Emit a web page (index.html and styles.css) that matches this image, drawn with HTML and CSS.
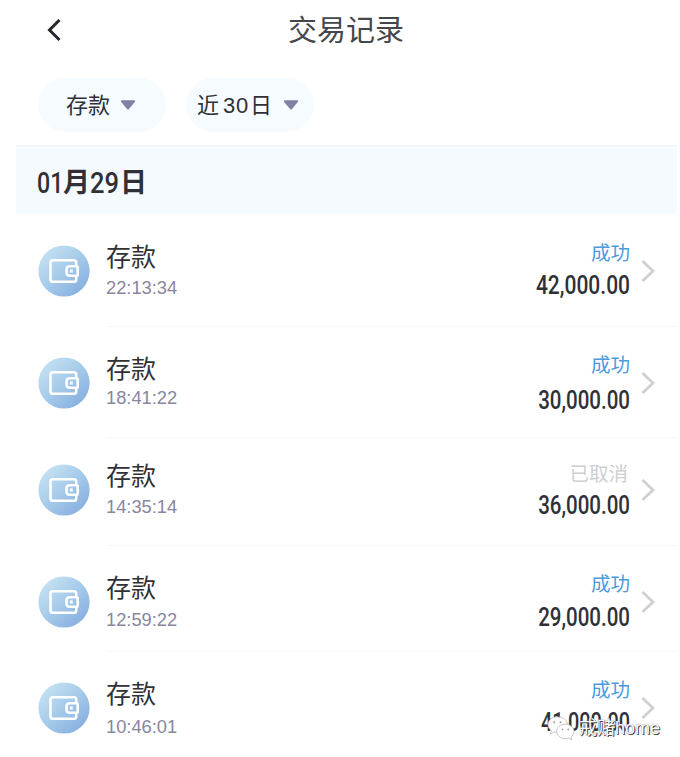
FILE: index.html
```html
<!DOCTYPE html>
<html lang="zh-CN">
<head>
<meta charset="utf-8">
<title>交易记录</title>
<link rel="stylesheet" href="styles.css">
</head>
<body>
<svg class="defs" width="0" height="0" aria-hidden="true">
  <defs>
    <linearGradient id="disc" x1="0.1" y1="0.1" x2="0.85" y2="0.9">
      <stop offset="0" stop-color="#c6e2f3"/>
      <stop offset="0.5" stop-color="#a6cbea"/>
      <stop offset="1" stop-color="#88b0e0"/>
    </linearGradient>
    <symbol id="wallet" viewBox="0 0 52 52">
      <circle cx="26" cy="26" r="25.6" fill="url(#disc)"/>
      <g fill="none" stroke="#fff" stroke-width="2.6" stroke-linejoin="round">
        <path d="M38.2 21V17.500Q38.200 15.200 35.900 15.200H14.800Q12.500 15.200 12.500 17.500V34.500Q12.500 36.800 14.800 36.800H35.900Q38.200 36.800 38.200 34.500V31"/>
        <path d="M38.500 21.300H32Q28.500 21.300 28.500 24.300V27.500Q28.500 30.700 32 30.700H38.500Q39.700 30.700 39.700 29.500V22.500Q39.700 21.300 38.500 21.300Z"/>
      </g>
      <rect x="31.800" y="24.500" width="3" height="3" fill="#fff"/>
    </symbol>
    <symbol id="chevron" viewBox="0 0 16 26">
      <path d="M2.500 3L13 13L2.500 23" fill="none" stroke="#cfd0d4" stroke-width="2.800"/>
    </symbol>
    <symbol id="caret" viewBox="0 0 16 10">
      <path d="M1.800 1.200H14.200L8 8.500Z" fill="#8080a4" stroke="#8080a4" stroke-width="2" stroke-linejoin="round"/>
    </symbol>
  </defs>
</svg>
<main class="page">
  <header class="bar">
    <svg class="back" viewBox="0 0 16 26"><path d="M13.500 3L3.500 13L13.500 23" fill="none" stroke="#25262b" stroke-width="3"/></svg>
    <h1 class="title">交易记录</h1>
  </header>
  <nav class="filters">
    <div class="pill pill-type"><span>存款</span><svg class="caret"><use href="#caret"/></svg></div>
    <div class="pill pill-range"><span>近</span><span class="days">30</span><span>日</span><svg class="caret"><use href="#caret"/></svg></div>
  </nav>
  <h2 class="date"><span class="num">01</span><span>月</span><span class="num num-day">29</span><span>日</span></h2>
  <section class="list">
    <article class="row row-1">
      <svg class="icon"><use href="#wallet"/></svg>
      <div class="info"><div class="name">存款</div><div class="time">22:13:34</div></div>
      <div class="result"><div class="status">成功</div><div class="amount">42,000.00</div></div>
      <svg class="chevron"><use href="#chevron"/></svg>
    </article>
    <article class="row row-2">
      <svg class="icon"><use href="#wallet"/></svg>
      <div class="info"><div class="name">存款</div><div class="time">18:41:22</div></div>
      <div class="result"><div class="status">成功</div><div class="amount">30,000.00</div></div>
      <svg class="chevron"><use href="#chevron"/></svg>
    </article>
    <article class="row row-3">
      <svg class="icon"><use href="#wallet"/></svg>
      <div class="info"><div class="name">存款</div><div class="time">14:35:14</div></div>
      <div class="result"><div class="status cancelled">已取消</div><div class="amount">36,000.00</div></div>
      <svg class="chevron"><use href="#chevron"/></svg>
    </article>
    <article class="row row-4">
      <svg class="icon"><use href="#wallet"/></svg>
      <div class="info"><div class="name">存款</div><div class="time">12:59:22</div></div>
      <div class="result"><div class="status">成功</div><div class="amount">29,000.00</div></div>
      <svg class="chevron"><use href="#chevron"/></svg>
    </article>
    <article class="row row-5">
      <svg class="icon"><use href="#wallet"/></svg>
      <div class="info"><div class="name">存款</div><div class="time">10:46:01</div></div>
      <div class="result"><div class="status">成功</div><div class="amount">41,000.00</div></div>
      <svg class="chevron"><use href="#chevron"/></svg>
    </article>
  </section>
  <div class="watermark">
    <svg class="wechat" viewBox="0 0 30 26">
      <g fill="#fff" stroke="#aaa" stroke-width="0.700">
        <path d="M11 1.500C5 1.500 1 5 1 9.500c0 2.600 1.300 4.700 3.500 6.200L3.500 19l3.800-2c1.200.3 2.400.5 3.700.5 6 0 10-3.500 10-8s-4-8-10-8Z"/>
        <path d="M19 9c-5 0-9 3.200-9 7.500s4 7.500 9 7.500c1.100 0 2.200-.2 3.200-.5l3.300 1.800-.9-2.800c2.100-1.400 3.400-3.500 3.400-6C28 12.200 24 9 19 9Z"/>
      </g>
      <g fill="#999"><circle cx="7.500" cy="7" r="1"/><circle cx="14" cy="7" r="1"/><circle cx="16" cy="14.500" r="0.900"/><circle cx="22" cy="14.500" r="0.900"/></g>
    </svg>
    <span>戒赌home</span>
  </div>
</main>
</body>
</html>
```

FILE: styles.css
```css
* { box-sizing: border-box; }

body {
  margin: 0;
  background: #fff;
  color: #303137;
  font-family: "Liberation Sans", "Noto Sans CJK SC", sans-serif;
}

.defs { position: absolute; }

.page {
  position: relative;
  width: 680px;
  height: 757px;
  padding: 0 3px 0 16px;
  overflow: hidden;
}

.bar {
  display: flex;
  align-items: center;
  height: 60px;
  padding-left: 30px;
}

.back { width: 16px; height: 26px; }

.title {
  margin: 2px 0 0 226px;
  font-size: 29px;
  font-weight: 400;
  line-height: 60px;
  color: #45464b;
}

.filters {
  display: flex;
  gap: 20px;
  height: 85px;
  padding: 18px 0 0 22px;
}

.pill {
  display: flex;
  align-items: center;
  width: 128px;
  height: 54px;
  border-radius: 27px;
  background: #f5fbff;
  font-size: 22px;
  line-height: 54px;
}

.pill span { padding-top: 2px; }
.pill-type { padding-left: 28px; }
.pill-range { padding-left: 11px; }
.days { margin: 0 1px 0 4px; letter-spacing: 0.8px; }
.caret { width: 16px; height: 10px; margin-left: 10px; }
.pill-range .caret { margin-left: 11px; }

.date {
  display: flex;
  height: 69px;
  margin: 0;
  padding-left: 21px;
  border-top: 1px solid #eff4f7;
  background: #f4fafe;
  font-size: 27px;
  font-weight: 700;
  line-height: 74px;
}

.num {
  width: 26px;
  font-family: Roboto, sans-serif;
  font-size: 29px;
  font-weight: 500;
  transform: scaleX(0.8);
  transform-origin: left;
}

.num-day { width: 30px; transform: scaleX(0.88); }

.row {
  display: flex;
  align-items: flex-start;
  padding-left: 22px;
  background: linear-gradient(#f7f7f9, #f7f7f9) 90px 100% / 571px 1px no-repeat;
}

.row-1 { height: 113px; padding-top: 31px; }
.row-2 { height: 111px; padding-top: 30px; }
.row-3 { height: 108px; padding-top: 26px; }
.row-4 { height: 106px; padding-top: 30px; }
.row-5 { height: 105px; padding-top: 30px; background: none; }

.icon { width: 52px; height: 52px; }

.info { flex: 1; margin-left: 16px; }

.name {
  height: 32px;
  margin-top: -4px;
  font-size: 25px;
  line-height: 32px;
}

.time {
  height: 20px;
  margin-top: 5px;
  font-size: 18.3px;
  line-height: 20px;
  color: #8886a0;
}

.row-2 .time { margin-top: 3px; }
.row-4 .time { margin-top: 6px; }
.row-5 .time { margin-top: 7px; }

.result {
  display: flex;
  flex-direction: column;
  align-items: flex-end;
}

.status {
  height: 24px;
  margin-top: -4px;
  font-size: 19.5px;
  line-height: 24px;
  color: #4c9ade;
}

.cancelled { margin: -2px 2px 0 0; color: #ceced3; }

.amount {
  height: 28px;
  margin-top: 7px;
  font-family: Roboto, sans-serif;
  font-size: 25px;
  font-weight: 500;
  line-height: 28px;
  transform: scaleX(0.82);
  transform-origin: right;
}

.row-1 .amount { transform: scaleX(0.84); }
.row-2 .amount { margin-top: 10px; }
.row-3 .amount { margin-top: 6px; }
.row-4 .amount { margin-top: 8px; }
.row-5 .amount { transform: scaleX(0.795); }

.chevron {
  width: 16px;
  height: 26px;
  margin: 13px 21px 0 10px;
}

.watermark {
  position: absolute;
  left: 547px;
  top: 715px;
  display: flex;
  align-items: center;
  gap: 3px;
  height: 26px;
  font-size: 18px;
  line-height: 26px;
  color: #fff;
  text-shadow: 1px 1px 0 #444, 0 0 1px #666;
  white-space: nowrap;
}

.wechat { width: 29px; height: 26px; }
```
